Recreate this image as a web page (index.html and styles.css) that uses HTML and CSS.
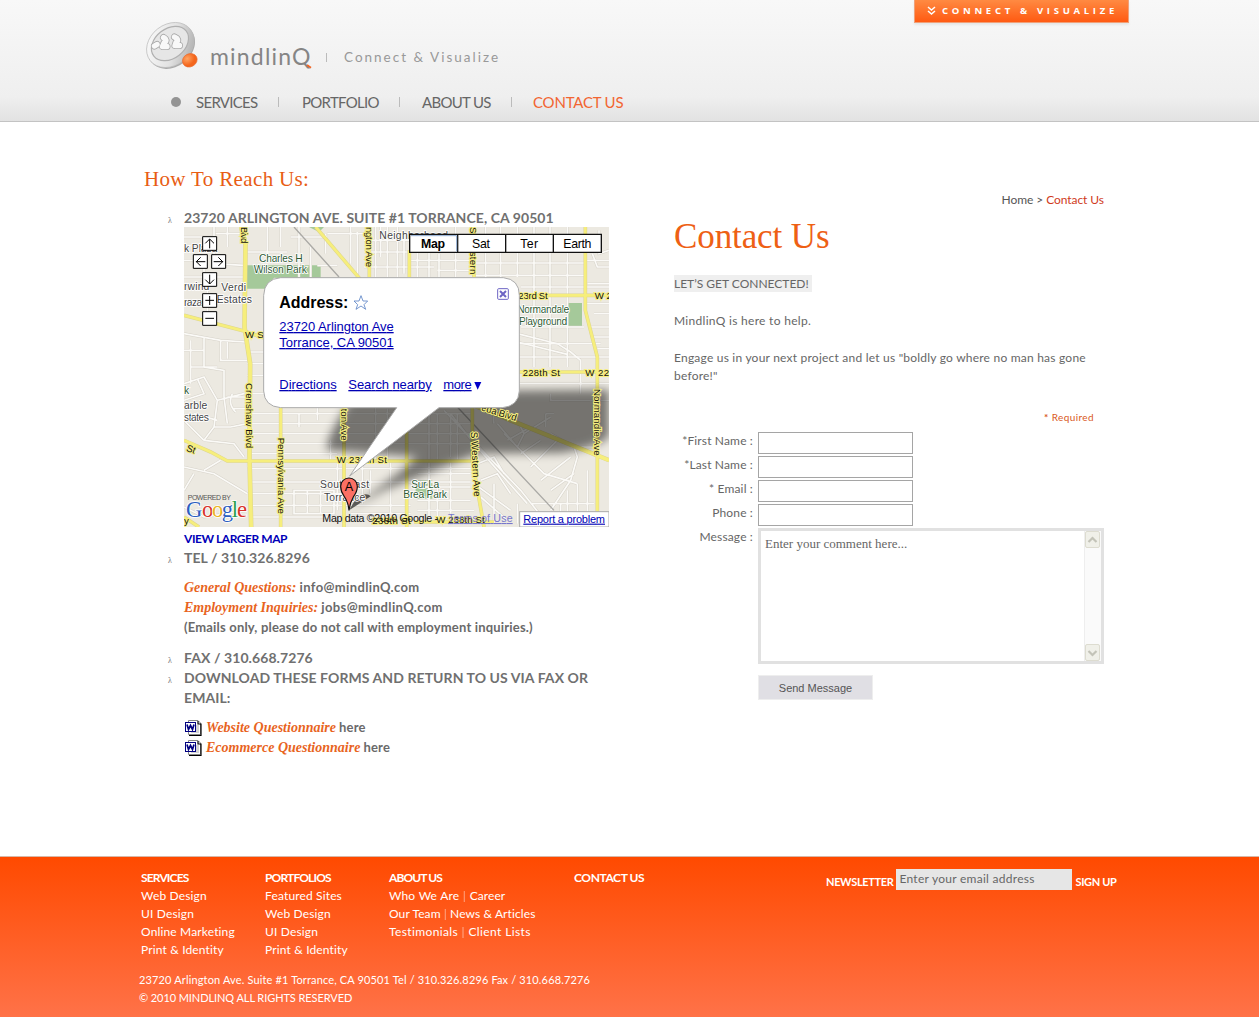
FILE: index.html
```
<!DOCTYPE html>
<html lang="en">
<head>
<meta charset="utf-8">
<title>mindlinQ | Contact Us</title>
<link rel="stylesheet" href="styles.css">
</head>
<body>
<header class="header">
  <div class="wrap header-wrap">
    <a class="ribbon"><svg width="9" height="10" viewBox="0 0 9 10"><path d="M1 1l3.500 3L8 1M1 5l3.500 3L8 5" fill="none" stroke="#fff" stroke-width="1.500"/></svg><span>CONNECT &amp; VISUALIZE</span></a>
    <div class="brand">
      <svg class="logo" width="56" height="52" viewBox="0 0 56 52">
        <defs>
          <linearGradient id="disc" x1="0" y1="0" x2="1" y2="1"><stop offset="0" stop-color="#fff"/><stop offset=".55" stop-color="#e2e2e2"/><stop offset="1" stop-color="#a0a0a0"/></linearGradient>
          <radialGradient id="ball" cx=".4" cy=".3"><stop offset="0" stop-color="#ffa463"/><stop offset="1" stop-color="#f4661c"/></radialGradient>
          <path id="blobs" d="M9.500 25L12 23.500M18.500 16.500L20.500 18Q22 20 19 22L17.500 25.500L22 25.500M29.500 16L32 17.500Q33.500 19.500 31 21.500L30 24.500L34.500 24.500"/>
        </defs>
        <ellipse cx="26" cy="25.500" rx="25.500" ry="20.500" transform="rotate(-38 26 25)" fill="#aaa"/>
        <ellipse cx="25.300" cy="24" rx="25.500" ry="20.500" transform="rotate(-38 25.300 24)" fill="url(#disc)" stroke="#bbb" stroke-width=".7"/>
        <ellipse cx="25" cy="22.500" rx="20.500" ry="14.800" transform="rotate(-38 25 22.500)" fill="#e6e6e6" stroke="#b0b0b0" stroke-width="1.200"/>
        <g fill="none" stroke-linecap="round" stroke-linejoin="round"><use href="#blobs" stroke="#a8a8a8" stroke-width="7"/><use href="#blobs" stroke="#f8f8f8" stroke-width="5.400"/></g>
        <ellipse cx="44.800" cy="39.300" rx="7.600" ry="6.500" transform="rotate(-28 44.800 39.300)" fill="url(#ball)" stroke="#e8672b" stroke-width=".6"/>
      </svg>
      <span class="brand-name">mindlin<span class="brand-q">Q<svg class="q-tail" width="6" height="5" viewBox="0 0 6 5"><path d="M1 1l4 2.800" stroke="#f26522" stroke-width="1.800"/></svg></span></span>
      <span class="brand-rule"></span>
      <span class="tagline">Connect &amp; Visualize</span>
    </div>
    <nav class="nav">
      <i class="dot"></i><a class="n1">SERVICES</a><a class="n2">PORTFOLIO</a><a class="n3">ABOUT US</a><a class="n4 active">CONTACT US</a>
    </nav>
  </div>
</header>

<main class="wrap main">
  <section class="reach">
    <h2>How To Reach Us:</h2>
    <ul class="reach-list">
      <li><span class="addr">23720 ARLINGTON AVE. SUITE #1 TORRANCE, CA 90501</span>
        <svg class="map" width="425" height="300" viewBox="0 0 1275 900">
          <defs>
            <filter id="soft" x="-20%" y="-30%" width="140%" height="160%"><feGaussianBlur stdDeviation="15"/></filter>
            <g id="roads">
              <!-- west side streets -->
              <path d="M0 100H60V180M0 150H180M90 0V110L180 115M95 20H180M130 0V60M0 30H90M70 170V290M0 230H55M0 320L110 340L185 345M20 340V470M60 330V420L120 430V510M110 340V400H190M0 370H60M20 420H100M130 345V395M0 470L60 450L100 520L180 500M40 455L60 500L0 520M100 520L90 600L60 640M90 600H140L190 590M120 510L130 590M130 510H190M145 545H190M190 375H260M190 410H250M190 445H270M190 500H280M60 640L150 650L180 690M0 580L60 640M0 720L90 740L190 800M30 740L0 790M60 730L110 700M190 720V690M0 840L60 870L190 850M30 560L100 580M145 500q-15 30 10 55"/>
              <!-- north streets -->
              <path d="M180 75H310M250 0V80M290 0V60M320 30H430M345 0V150M380 60V150M400 115H460M430 20H540M425 20V80M500 0V110M520 15V150M575 0V150M610 0V150M640 0V150M700 70V150M735 70V150M540 40H680M540 75H680M540 120H750M590 0V90M660 20V140M765 80V150M815 0V150M905 0V180M950 0V150M1000 0V150M1050 0V420M1098 0V420M1150 0V420M680 100H870M870 108H1200M870 145H1200M760 130H860M1010 180H1275M1010 240H1150M1010 300H1200M1005 350H1250M1005 390H1275M1200 100H1275M1225 80L1240 120H1275M1245 10V80L1275 70M1210 170H1275M1205 230H1275M1230 260H1275M1220 300H1275M1220 330H1275M1240 365H1275M1005 470H1275M1100 500V520H1275M1190 440V500M1230 520V640"/>
              <!-- central rows -->
              <path d="M195 560H860M195 590H860M195 620H860M200 650H860M195 680H460M195 725H860M195 765H470M480 765H860M195 800H290M300 800H480M300 835H680M195 835H290M195 870H480M345 560V600M400 540V580M440 640V700M575 540V700M610 545V700M735 545V870M760 560V700M800 560V690M820 560V700M535 700V830M560 730V800M620 700V860M460 700V850M330 790V860H450V790ZM370 790V860M410 790V860M500 860H680M700 740H860M700 780H860M700 820H860M700 850H870M760 780V870M800 700V860M340 590H860"/>
              <!-- south east subdivision -->
              <path d="M780 550L1010 790L1090 890M800 560L870 650L1030 830M930 590Q920 530 990 560L1020 620L1000 660L940 590M1020 620L1100 570M1085 560H1110M1085 560V600M1100 620L1170 660L1180 690L1160 760L1100 850M1040 720L1120 640M1070 760L1160 690M1100 790L1170 740M960 620L1080 740L1180 770M970 640L1040 600M1010 680L1070 640M1160 660H1230M1150 790V890M1120 830H1230M880 710L930 690L960 740M890 760L940 740L980 800M1040 830H1130V900M1180 770V860M1210 730V890"/>
              <path d="M1000 320L1120 350L1160 375L1190 400M1000 345L1150 382M1190 400V430M870 770L980 850M930 770V890M890 810L970 880M1000 830V890"/>
            </g>
            <g id="mains">
              <path d="M170 0L183 50L180 300L197 410L195 690L200 900M173 0L186 50L183 300L200 410L198 690L203 900"/>
              <path d="M0 265L180 312L260 340M0 640L80 675L130 702H860M395 0L540 170M556 20V150M480 540V900M290 540V900M676 70V150M668 540V900M870 0V150M865 540V700L900 900M1204 0V250L1240 390V900M1000 205H1275M1000 435H1275M0 870L45 900M690 885H930"/>
              <path d="M860 530L1275 698M860 533L1275 701"/>
            </g>
          </defs>
          <rect width="1275" height="900" fill="#ece9e1"/>
          <path d="M184 115H410V160L270 152L248 185H184ZM375 0H420L405 15ZM1150 228H1194V297H1150ZM695 760H745V815H695Z" fill="#a5c99a"/>
          <use href="#roads" fill="none" stroke="#d6d2c9" stroke-width="8"/>
          <use href="#roads" fill="none" stroke="#fbfaf7" stroke-width="5"/>
          <path d="M330 0L465 150M820 540L1110 850" fill="none" stroke="#aaa9a5" stroke-width="4"/>
          <use href="#mains" fill="none" stroke="#ddd58c" stroke-width="11"/>
          <use href="#mains" fill="none" stroke="#f6ee7c" stroke-width="8"/>
          <!-- shadow of the info window -->
          <path d="M500 520Q600 490 1275 488V630Q1230 665 1130 678L880 680L600 790L495 850L640 740L700 690L430 670Q420 640 500 520Z" fill="#000" opacity=".5" filter="url(#soft)"/>
          <path d="M495 850L560 808Q550 795 520 808Z" fill="#222" opacity=".7"/>
          <g class="lab">
            <text x="0" y="75" textLength="100">k Plaza</text><text x="0" y="188" textLength="76">rwind</text><text x="0" y="238" textLength="68">razas</text>
            <text x="112" y="193" textLength="74">Verdi</text><text x="98" y="229" textLength="106">Estates</text>
            <g class="green"><text x="225" y="106" textLength="131">Charles H</text><text x="209" y="139" textLength="160">Wilson Park</text><text x="0" y="500">k</text>
            <text x="1000" y="259" textLength="156">Normandale</text><text x="1005" y="293" textLength="145">Playground</text><text x="682" y="782" textLength="84">Sur La</text><text x="658" y="813" textLength="131">Brea Park</text></g>
            <text x="0" y="545" textLength="70">arble</text><text x="0" y="583" textLength="75">states</text><text x="586" y="37" textLength="206">Neighborhood</text>
            <text x="408" y="784" textLength="147">Southeast</text><text x="420" y="822" textLength="124">Torrance</text>
          </g>
          <g class="road">
            <text x="183" y="333" textLength="56">W S</text><text x="1003" y="215" textLength="88">23rd St</text><text x="1232" y="215">W 2</text><text x="1016" y="446" textLength="112">228th St</text><text x="1204" y="446" textLength="71">W 22</text>
            <text x="458" y="708" textLength="151">W 235th St</text><text transform="translate(5 671) rotate(20)">St</text><text transform="translate(890 550) rotate(17)" textLength="110">eda Blvd</text>
            <text transform="translate(170 0) rotate(90)" textLength="49">Blvd</text><text transform="translate(187 468) rotate(90)" textLength="195">Crenshaw Blvd</text><text transform="translate(281 632) rotate(90)" textLength="229">Pennsylvania Ave</text>
            <text transform="translate(547 0) rotate(90)" textLength="120">ngton Ave</text><text transform="translate(472 545) rotate(90)" textLength="96">ton Ave</text><text transform="translate(857 0) rotate(90)" textLength="142">S Western</text>
            <text transform="translate(860 615) rotate(87)" textLength="194">S Western Ave</text><text transform="translate(1231 486) rotate(90)" textLength="200">Normandie Ave</text>
            <text x="565" y="891" textLength="115">238th St</text><text x="757" y="888" textLength="145">W 238th St</text><text x="0" y="891">y</text>
          </g>
          <!-- info window -->
          <path d="M290 152H958Q1006 157 1006 205V492Q1003 538 955 542H765L497 747L638 542H290Q241 538 239 492V205Q241 156 290 152Z" fill="#fff" stroke="#aaa" stroke-width="3"/>
          <text class="title" x="286" y="243" textLength="207">Address:</text>
          <path d="M531 206L537 222L551 222L540 233L545 247L531 237L516 247L521 233L510 222H525Z" fill="#fff" stroke="#5b83c5" stroke-width="2.500"/>
          <g class="link"><text x="286" y="312" textLength="343">23720 Arlington Ave</text><text x="286" y="360" textLength="343">Torrance, CA 90501</text><text x="286" y="486" textLength="172">Directions</text><text x="493" y="486" textLength="250">Search nearby</text><text x="778" y="486" textLength="85">more</text></g>
          <path d="M871 465H892L881 488Z" fill="#0000c8"/>
          <rect x="941" y="185" width="32" height="32" rx="3" fill="#fff" stroke="#6c64c4" stroke-width="3"/><path d="M948 192L966 210M966 192L948 210" stroke="#6c64c4" stroke-width="6"/>
          <!-- marker -->
          <path d="M495 850Q493 826 480 807Q470 794 470 778A25 25 0 0 1 520 778Q520 794 509 808Q497 829 495 850Z" fill="#fb7064" stroke="#111" stroke-width="3.500"/><text x="482" y="791" class="pin">A</text>
          <!-- pan and zoom buttons -->
          <g fill="#fff" stroke="#000" stroke-width="3"><path d="M56 29H98V70H56ZM28 83H70V124H28ZM83 83H125V124H83ZM56 137H98V178H56ZM56 200H98V241H56ZM56 254H98V295H56Z"/></g>
          <path d="M77 37V64M64 49L77 36L90 49M36 104H64M50 91L37 104L50 117M89 104H117M103 91L116 104L103 117M77 143V171M64 158L77 171L90 158M64 220H90M77 207V234M64 274H90" fill="none" stroke="#000" stroke-width="3"/>
          <!-- map type buttons -->
          <path d="M677 22H1252V76H677ZM821 22V76M965 22V76M1108 22V76" fill="#fff" stroke="#111" stroke-width="4"/><path d="M681 26H818V73" fill="none" stroke="#8da9cf" stroke-width="3"/>
          <g class="type"><text x="711" y="63" font-weight="bold" textLength="72">Map</text><text x="864" y="63" textLength="54">Sat</text><text x="1009" y="63" textLength="53">Ter</text><text x="1138" y="63" textLength="84">Earth</text></g>
          <text class="powered" x="11" y="818" textLength="130">POWERED BY</text>
          <g class="google"><text x="6" y="871" fill="#2d5fc0">G</text><text x="54" y="871" fill="#d8342a">o</text><text x="84" y="871" fill="#eab526">o</text><text x="113" y="871" fill="#2d5fc0">g</text><text x="143" y="871" fill="#2ba14a">l</text><text x="159" y="871" fill="#d8342a">e</text></g>
          <text class="copy" x="415" y="885" textLength="347">Map data ©2010 Google -</text><text class="terms" x="792" y="885" textLength="194">Terms of Use</text>
          <rect x="1007" y="854" width="268" height="46" fill="#fff" stroke="#aaa" stroke-width="3"/><text class="report" x="1018" y="887" textLength="245">Report a problem</text>
        </svg>
        <a class="larger">VIEW LARGER MAP</a>
      </li>
      <li><span class="tel">TEL / 310.326.8296</span>
        <p class="mails"><em class="e1">General Questions:</em> <span class="s1">info@mindlinQ.com</span><br><em class="e2">Employment Inquiries:</em> <span class="s1">jobs@mindlinQ.com</span><br><span class="s2">(Emails only, please do not call with employment inquiries.)</span></p>
      </li>
      <li><span class="tel">FAX / 310.668.7276</span></li>
      <li><span class="dl">DOWNLOAD THESE FORMS AND RETURN TO US VIA FAX OR<br>EMAIL:</span>
        <p class="docs">
          <span class="doc"><svg width="17" height="16" viewBox="0 0 17 16"><path d="M3.500 .5H13L15.500 3V14.500H3.500Z" fill="#fff" stroke="#888"/><path d="M13 1V4H16V15.500H4" fill="none" stroke="#000" stroke-width="1.200"/><path d="M11 6H14M11 8H14M11 10H14M6 12H14" stroke="#aaa"/><rect x=".5" y="2.500" width="10" height="9" fill="#fff" stroke="#000080"/><path d="M2 4.500l1.500 5 2-4 2 4L9 4.500" fill="none" stroke="#000080" stroke-width="1.700"/></svg><em class="e3">Website Questionnaire</em> here</span>
          <span class="doc"><svg width="17" height="16" viewBox="0 0 17 16"><path d="M3.500 .5H13L15.500 3V14.500H3.500Z" fill="#fff" stroke="#888"/><path d="M13 1V4H16V15.500H4" fill="none" stroke="#000" stroke-width="1.200"/><path d="M11 6H14M11 8H14M11 10H14M6 12H14" stroke="#aaa"/><rect x=".5" y="2.500" width="10" height="9" fill="#fff" stroke="#000080"/><path d="M2 4.500l1.500 5 2-4 2 4L9 4.500" fill="none" stroke="#000080" stroke-width="1.700"/></svg><em class="e4">Ecommerce Questionnaire</em> here</span>
        </p>
      </li>
    </ul>
  </section>

  <section class="contact">
    <div class="crumbs">Home &gt; <a>Contact Us</a></div>
    <h1>Contact Us</h1>
    <p class="lead"><span>LET’S GET CONNECTED!</span></p>
    <p class="t1">MindlinQ is here to help.</p>
    <p class="t2">Engage us in your next project and let us "boldly go where no man has gone<br>before!"</p>
    <div class="required"><b>*</b> Required</div>
    <form class="form">
      <label class="l1">*First Name :</label><input class="field">
      <label class="l2">*Last Name :</label><input class="field">
      <label class="l3">* Email :</label><input class="field">
      <label class="l4">Phone :</label><input class="field">
      <label class="l5">Message :</label>
      <div class="area"><span>Enter your comment here...</span>
        <div class="scroll"><b><svg width="15" height="16" viewBox="0 0 15 16"><path d="M3.500 10l4-4 4 4" fill="none" stroke="#c3c3b8" stroke-width="2.200"/></svg></b><b><svg width="15" height="16" viewBox="0 0 15 16"><path d="M3.500 6l4 4 4-4" fill="none" stroke="#c3c3b8" stroke-width="2.200"/></svg></b></div>
      </div>
      <button class="send" type="button">Send Message</button>
    </form>
  </section>
</main>

<footer class="footer">
  <div class="wrap footer-wrap">
    <div class="cols">
      <div class="col c1"><h4>SERVICES</h4><a>Web Design</a><a>UI Design</a><a>Online Marketing</a><a>Print &amp; Identity</a></div>
      <div class="col c2"><h4>PORTFOLIOS</h4><a>Featured Sites</a><a>Web Design</a><a>UI Design</a><a>Print &amp; Identity</a></div>
      <div class="col c3"><h4>ABOUT US</h4><span class="r1">Who We Are <i>|</i> Career</span><span class="r2">Our Team <i>|</i> News &amp; Articles</span><span class="r3">Testimonials <i>|</i> Client Lists</span></div>
      <div class="col c4"><h4>CONTACT US</h4></div>
      <div class="news"><b class="nl">NEWSLETTER</b><span class="mail">Enter your email address</span><b class="su">SIGN UP</b></div>
    </div>
    <div class="legal"><span class="g1">23720 Arlington Ave. Suite #1 Torrance, CA 90501 Tel / 310.326.8296 Fax / 310.668.7276</span><br><span class="g2">© 2010 MINDLINQ ALL RIGHTS RESERVED</span></div>
  </div>
</footer>
</body>
</html>
```
FILE: styles.css
```
* { box-sizing: border-box; }
body { margin: 0; background: #fff; color: #666; font: 12px/18px Lato, "Liberation Sans", sans-serif; white-space: nowrap; }
h1, h2, h4, p, ul { margin: 0; padding: 0; font-weight: normal; }
.wrap { width: 980px; margin-left: 139px; }

.header { height: 122px; background: linear-gradient(#f8f8f8, #efefef 80%, #e2e2e2); border-bottom: 1px solid #c3c3c3; }
.header-wrap { position: relative; padding-top: 21px; }
.ribbon { position: absolute; left: 775px; top: 0; width: 215px; height: 23px; padding-left: 12px; display: flex; align-items: center; gap: 6px; background: linear-gradient(#ff8a42, #ff5a12); border: 1px solid #f0a078; border-top: 0; box-shadow: 0 2px 2px #e6e6e6; color: #fff; font: bold 9.500px/22px "Open Sans", sans-serif; letter-spacing: 3.700px; }
.ribbon svg { flex: none; }
.brand { display: flex; height: 52px; padding-left: 6px; }
.logo { flex: none; }
.brand-name { width: 104px; margin-left: 9px; padding-top: 20px; font-size: 23px; line-height: 30px; letter-spacing: 1.200px; color: #858585; }
.brand-q { position: relative; }
.q-tail { position: absolute; right: 0; bottom: 1px; }
.brand-rule { width: 1px; height: 9px; margin: 32px 17px 0 12px; background: #bbb; }
.tagline { padding-top: 27px; font-size: 13.500px; letter-spacing: 2px; color: #999; }
.nav { display: flex; align-items: center; height: 18px; margin-top: 20px; padding-left: 32px; color: #666; font-size: 15px; letter-spacing: -.7px; }
.dot { width: 10px; height: 10px; margin-right: 15px; border-radius: 50%; background: #949494; }
.nav a { display: flex; align-items: center; }
.nav a + a::before { content: ""; width: 1px; height: 10px; background: #bbb; margin-right: 23px; }
.n1 { width: 82px; }
.n2 { width: 121px; }
.n3 { width: 112px; }
.nav .n4 { color: #f26531; letter-spacing: -.2px; }
.nav a.n3::before { margin-right: 22px; }
.nav a.n4::before { margin-right: 21px; }

.main { display: flex; height: 735px; }
.reach { width: 535px; padding: 45px 0 0 5px; }
.reach h2 { font: 21px/25px "Liberation Serif", serif; letter-spacing: .35px; color: #e85d14; }
.reach-list { list-style: none; padding: 16px 0 0 40px; font-weight: bold; font-size: 14px; line-height: 20px; color: #707070; }
.reach-list li { position: relative; }
.reach-list li::before { content: "λ"; position: absolute; left: -16px; top: 3px; font: 8px/20px "Liberation Serif", serif; }
.addr { letter-spacing: .06px; }
.tel, .dl { letter-spacing: .08px; }
.map { display: block; margin-top: -1px; overflow: hidden; font-family: "Liberation Sans", Arial, sans-serif; font-weight: normal; }
.larger { display: block; height: 21px; padding-top: 2px; color: #0000b8; font-size: 12px; line-height: 20px; letter-spacing: -.45px; }
.reach-list p { padding: 10px 0; font-size: 13px; font-weight: bold; color: #6a6a6a; }
.reach-list .mails { padding: 9px 0 11px; }
.reach-list em { font: italic bold 14px/14px "Liberation Serif", serif; color: #e8641e; }
.s1 { letter-spacing: .36px; }
.s2 { letter-spacing: .18px; }
.reach-list .docs { display: flex; flex-direction: column; padding-top: 9px; }
.reach-list .doc { display: flex; align-items: center; height: 20px; letter-spacing: .2px; }
.doc svg { margin: 2px 4px 0 1px; }
.doc em { margin: 1px 3px 0 0; letter-spacing: 0; }

.lab text { font-size: 31px; fill: #444; stroke: #fff; stroke-width: 5; paint-order: stroke; }
.lab .green text { fill: #2e5a34; }
.road text { font-size: 29px; fill: #111; stroke: #f6ee80; stroke-width: 6; paint-order: stroke; }
.title { font-size: 48px; font-weight: bold; fill: #000; }
.link text { font-size: 39px; fill: #0000b4; text-decoration: underline; }
.pin { font-size: 38px; fill: #000; }
.type { font-size: 37px; fill: #000; }
.powered { font-size: 21px; fill: #555; }
.google text { font: 68px "Liberation Serif", serif; stroke: #fff; stroke-width: 5; paint-order: stroke; }
.copy { font-size: 32px; fill: #111; }
.terms { font-size: 32px; fill: #7777cc; text-decoration: underline; }
.report { font-size: 33px; fill: #0000b4; text-decoration: underline; }

.contact { width: 430px; padding-top: 69px; }
.crumbs { text-align: right; color: #555; letter-spacing: -.06px; }
.crumbs a { color: #d03a1c; }
.contact h1 { padding-top: 7px; font: 35px/42px "Liberation Serif", serif; letter-spacing: -.1px; color: #ee6014; }
.lead { padding-top: 17px; }
.lead span { display: inline-block; height: 17px; line-height: 18px; background: #efefef; padding-right: 3px; }
.t1 { padding-top: 19px; letter-spacing: .3px; }
.t2 { padding-top: 19px; letter-spacing: .22px; }
.required { padding: 23px 10px 0 0; text-align: right; font-size: 10px; letter-spacing: .4px; color: #d9581c; }
.form { display: grid; grid-template-columns: 79px 346px; column-gap: 5px; grid-template-rows: repeat(4, 24px) 147px 25px; padding-top: 6px; }
.form label { text-align: right; letter-spacing: .15px; }
.field { width: 155px; height: 22px; border: 1px solid #a5a5a5; background: #fff; padding: 0; }
.area { height: 136px; border: 3px solid #e1e1e1; display: flex; justify-content: space-between; padding: 0 0 0 4px; }
.area span { padding-top: 4px; font: 13px/18px "Liberation Serif", serif; }
.scroll { width: 17px; border-left: 1px solid #eee; background: #fafafa; display: flex; flex-direction: column; justify-content: space-between; }
.scroll b { width: 15px; height: 17px; background: #f0f0e9; border: 1px solid #dddcd0; border-radius: 2px; overflow: hidden; line-height: 0; }
.scroll svg { margin-left: -1px; }
.send { grid-column: 2; width: 115px; height: 25px; background: #e0dfe4; border: 1px solid #eee; padding: 0; font: 11px "Liberation Sans", Arial, sans-serif; color: #555; }

.footer { height: 160px; background: linear-gradient(#ff4a00, #ff7248); box-shadow: 0 -1px #d8b8a8; color: #fff; }
.footer-wrap { padding-top: 12px; }
.cols { display: flex; height: 102px; padding-left: 2px; }
.col { display: flex; flex-direction: column; letter-spacing: .15px; }
.col h4 { font-size: 12px; line-height: 18px; letter-spacing: -.85px; font-weight: bold; }
.col i { font-style: normal; opacity: .5; }
.c1 { width: 124px; }
.c2 { width: 124px; }
.c3 { width: 185px; }
.c3 h4 { letter-spacing: -.9px; }
.c4 { width: 252px; }
.c4 h4 { letter-spacing: -.4px; }
.r1 { letter-spacing: .08px; word-spacing: .6px; }
.r2 { letter-spacing: .1px; }
.r3 { letter-spacing: .38px; }
.news { display: flex; align-items: flex-start; }
.news b { line-height: 26px; font-size: 11px; letter-spacing: -.35px; }
.mail { width: 176px; height: 21px; margin: 0 3px; padding-left: 3px; background: #e6e6e6; color: #666; line-height: 20px; letter-spacing: .27px; }
.legal { font-size: 11px; }
.g1 { letter-spacing: .145px; }
.g2 { letter-spacing: -.08px; }
```
